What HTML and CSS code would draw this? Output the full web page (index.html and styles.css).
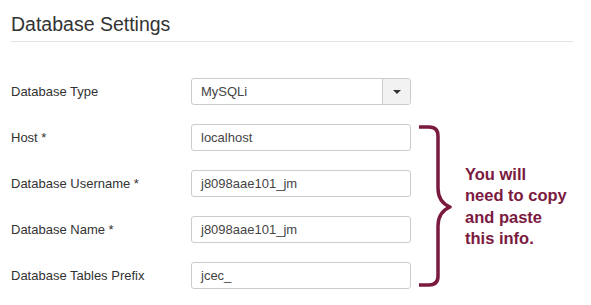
FILE: index.html
```html
<!DOCTYPE html>
<html>
<head>
<meta charset="utf-8">
<link rel="stylesheet" href="styles.css">
</head>
<body>
<div class="page">
  <h2 class="title">Database Settings</h2>
  <div class="form">
    <label class="label">Database Type</label>
    <div class="select">
      <span class="select-value">MySQLi</span>
      <span class="select-btn"><span class="caret"></span></span>
    </div>

    <label class="label">Host *</label>
    <div class="input">localhost</div>

    <div class="annotation">
      <svg class="brace" width="44" height="165" viewBox="0 0 44 165">
        <path d="M8,3 H18 Q27,3 27,12 V64 Q27,78 39,83 Q27,88 27,102 V152 Q27,161 18,161 H8" fill="none" stroke="#7b1a3f" stroke-width="3.5" stroke-linejoin="round"/>
      </svg>
      <div class="note">You will<br>need to copy<br>and paste<br>this info.</div>
    </div>

    <label class="label">Database Username *</label>
    <div class="input">j8098aae101_jm</div>

    <label class="label">Database Name *</label>
    <div class="input">j8098aae101_jm</div>

    <label class="label">Database Tables Prefix</label>
    <div class="input">jcec_</div>
  </div>
</div>
</body>
</html>
```

FILE: styles.css
```css
html, body {
  margin: 0;
  padding: 0;
  background: #fff;
}

.page {
  padding-left: 11px;
  font-family: "Liberation Sans", Arial, sans-serif;
  color: #333;
}

.title {
  width: 562px;
  margin: 0;
  padding: 12px 0 5px 0;
  font-size: 19.5px;
  line-height: 24px;
  font-weight: normal;
  color: #333;
  border-bottom: 1px solid #e5e5e5;
}

.form {
  margin-top: 36px;
  display: grid;
  grid-template-columns: 180px 220px 1fr;
  grid-auto-rows: 27px;
  row-gap: 19px;
}

.label {
  grid-column: 1;
  display: flex;
  align-items: center;
  font-size: 13px;
  color: #333;
}

.input, .select {
  grid-column: 2;
  box-sizing: border-box;
  height: 27px;
  border: 1px solid #ccc;
  border-radius: 3px;
  display: flex;
  align-items: center;
  font-size: 13px;
  color: #444;
  background: #fff;
}

.input {
  padding-left: 9px;
}

.select-value {
  flex: 1;
  padding-left: 9px;
}

.select-btn {
  width: 28px;
  height: 100%;
  box-sizing: border-box;
  border-left: 1px solid #ccc;
  background: #f2f2f2;
  border-radius: 0 2px 2px 0;
  display: flex;
  align-items: center;
  justify-content: center;
}

.caret {
  width: 0;
  height: 0;
  border-left: 4px solid transparent;
  border-right: 4px solid transparent;
  border-top: 4px solid #333;
}

.annotation {
  grid-column: 3;
  grid-row: 2 / 6;
  display: flex;
  align-items: center;
}

.brace {
  flex: none;
  display: block;
}

.note {
  margin-left: 10px;
  font-size: 16.5px;
  line-height: 21.5px;
  font-weight: bold;
  color: #7b1a3f;
}
```
